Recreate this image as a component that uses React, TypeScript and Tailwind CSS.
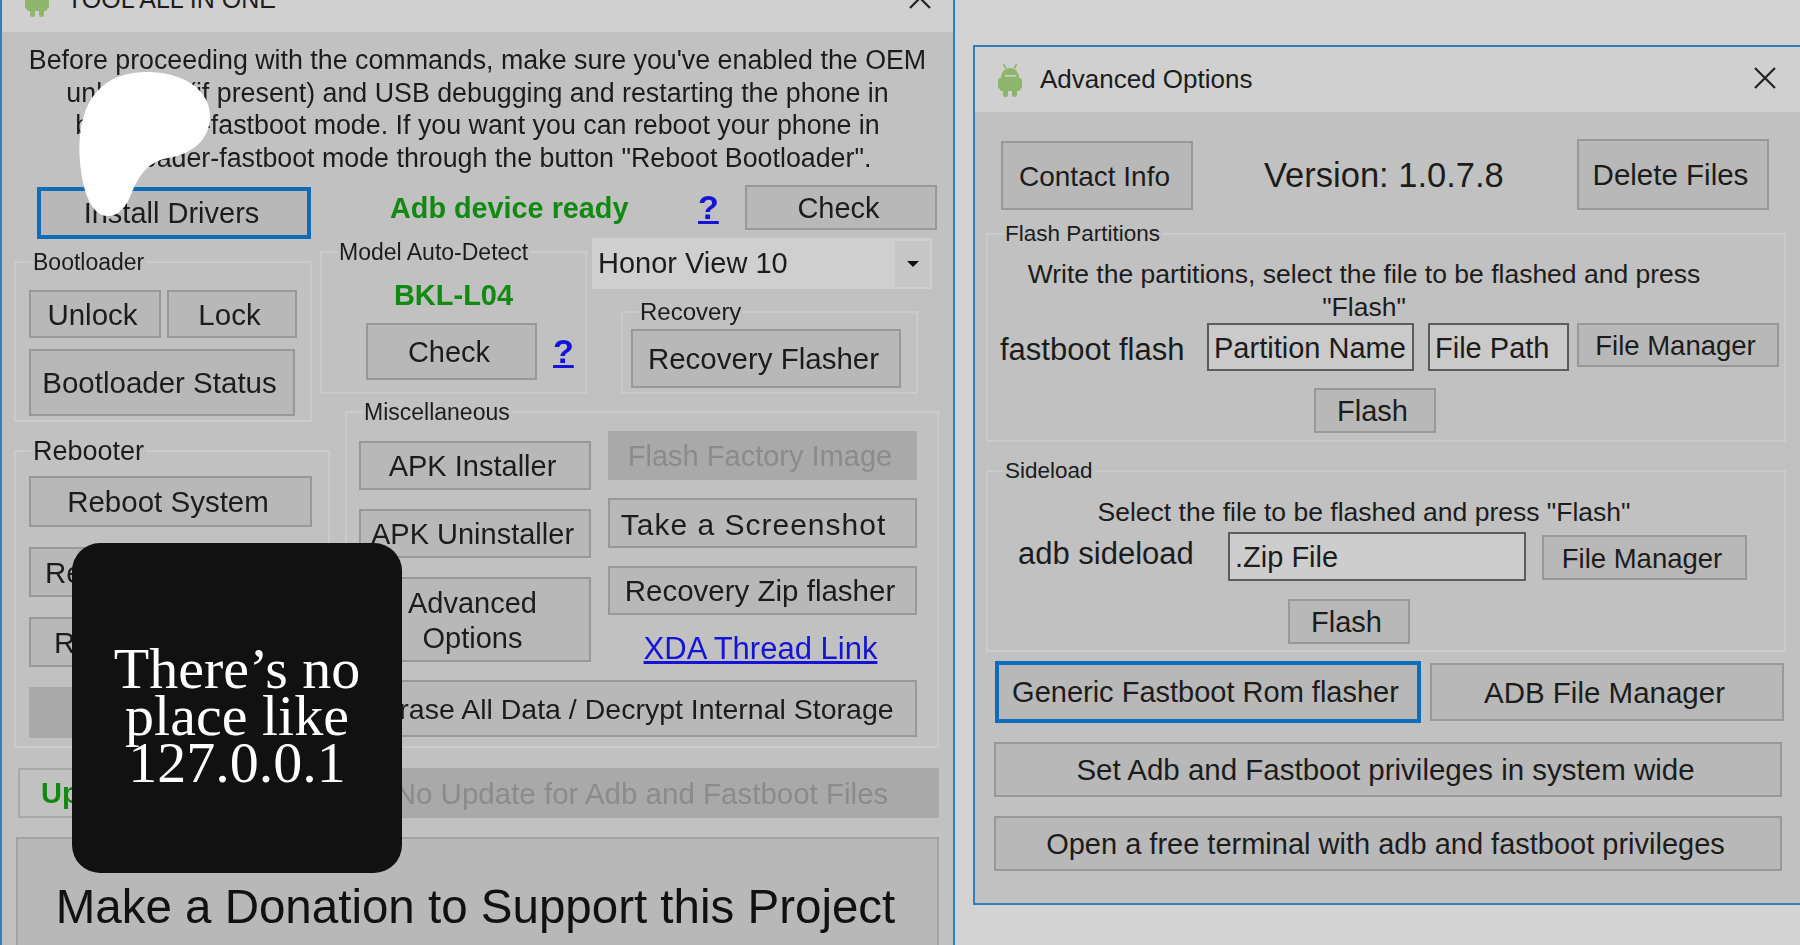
import React from "react";

const FONT = "[font-family:'Liberation_Sans',Arial,sans-serif]";

function Android() {
  return (
    <svg width="24" height="36" viewBox="0 0 24 36" className="shrink-0">
      <g fill="#8db56c">
        <path d="M3 15a9 9 0 0 1 18 0v1H3z" />
        <rect x="2" y="17" width="20" height="12" rx="1.5" />
        <rect x="0" y="16" width="24" height="11" rx="2.5" />
        <rect x="5" y="27" width="5" height="8" rx="2" />
        <rect x="14" y="27" width="5" height="8" rx="2" />
        <path d="M7 7 4.8 2.4l1.4-.7L8.6 6.2zM17 7l2.2-4.6-1.4-.7-2.4 4.5z" />
      </g>
      <rect x="7" y="13" width="11" height="1.6" fill="#d0d0d0" />
    </svg>
  );
}

function CloseX() {
  return (
    <svg width="24" height="24" viewBox="0 0 24 24" className="mb-[4px] shrink-0">
      <path d="M2 2 22 22M22 2 2 22" stroke="#222" strokeWidth="2.2" fill="none" />
    </svg>
  );
}

function Btn({ className = "", children }: { className?: string; children: React.ReactNode }) {
  return (
    <div className={"flex shrink-0 items-center justify-center whitespace-nowrap border-2 border-[#989898] bg-[#b8b8b8] pr-[5px] pt-[2px] text-center text-[#1c1c1c] " + className}>
      {children}
    </div>
  );
}

function Disabled({ className = "", children }: { className?: string; children: React.ReactNode }) {
  return (
    <div className={"flex shrink-0 items-center justify-center whitespace-nowrap bg-[#a9a9a9] pr-[5px] pt-[2px] text-center text-[#8b8b8b] " + className}>
      {children}
    </div>
  );
}

function Group({ title, className = "", legend = "", children }: { title: string; className?: string; legend?: string; children: React.ReactNode }) {
  return (
    <fieldset className={"shrink-0 border-2 border-[#cbcbcb] text-[29.5px] " + className}>
      <legend className={"ml-[15px] h-[30px] px-[2px] leading-[30px] text-[#1c1c1c] " + (legend || "text-[23px]")}>{title}</legend>
      {children}
    </fieldset>
  );
}

function Title({ text, pr, size }: { text: string; pr: string; size: string }) {
  return (
    <div className={"flex h-[65px] items-center justify-between bg-[#d0d0d0] pl-[23px] " + pr}>
      <div className={"flex items-center gap-[18px] text-[#1c1c1c] " + size}>
        <Android />
        <span>{text}</span>
      </div>
      <CloseX />
    </div>
  );
}

function LeftWindow() {
  return (
    <div className="absolute left-0 top-[-33px] h-[1000px] w-[955px] border-x-2 border-[#2f7fc1] bg-[#c1c1c1]">
      <Title text="TOOL ALL IN ONE" pr="pr-[21px]" size="text-[25px]" />
      <div className="h-[143px] pt-[12px] text-center text-[26.8px] leading-[32.7px] text-[#1c1c1c]">
        <p>Before proceeding with the commands, make sure you've enabled the OEM</p>
        <p>unlocking (if present) and USB debugging and restarting the phone in</p>
        <p>bootloader-fastboot mode. If you want you can reboot your phone in</p>
        <p>bootloader-fastboot mode through the button "Reboot Bootloader".</p>
      </div>
      <div className="flex text-[29.5px]">
        <div className="ml-[12px] w-[319px] shrink-0">
          <div className="ml-[23px] mt-[12px] flex h-[52px] w-[274px] items-center justify-center border-[4px] border-[#0f6cb9] bg-[#b8b8b8] pr-[5px] pt-[2px] text-[29px] text-[#1c1c1c]">
            Install Drivers
          </div>
          <Group title="Bootloader" className="mt-[8px] h-[175px] w-[298px]">
            <div className="ml-[13px] mt-[13px] flex gap-[6px]">
              <Btn className="h-[48px] w-[132px]">Unlock</Btn>
              <Btn className="h-[48px] w-[130px]">Lock</Btn>
            </div>
            <Btn className="ml-[13px] mt-[11px] h-[67px] w-[266px]">Bootloader Status</Btn>
          </Group>
          <Group title="Rebooter" legend="text-[27px]" className="mt-[14px] h-[312px] w-[316px]">
            <div className="ml-[13px] mt-[10px] flex flex-col gap-[20px]">
              <Btn className="h-[51px] w-[283px]">Reboot System</Btn>
              <Btn className="h-[50px] w-[283px]">Reboot Bootloader</Btn>
              <Btn className="h-[50px] w-[283px]">Reboot Recovery</Btn>
              <Disabled className="h-[51px] w-[283px]">Fastboot</Disabled>
            </div>
          </Group>
        </div>
        <div className="ml-[12px] w-[594px] shrink-0">
          <div className="mt-[10px] flex h-[45px] items-center">
            <span className="ml-[45px] mt-[3px] w-[308px] text-[28.8px] font-bold text-[#118a11]">Adb device ready</span>
            <span className="w-[47px] text-[34px] font-bold text-[#1414d8] underline">?</span>
            <Btn className="h-[45px] w-[192px] text-[29px]">Check</Btn>
          </div>
          <div className="mt-[7px] flex">
            <Group title="Model Auto-Detect" className="-ml-[25px] h-[157px] w-[267px]">
              <div className="mt-[13px] text-center text-[29px] font-bold leading-[30px] text-[#118a11]">BKL-L04</div>
              <div className="ml-[44px] mt-[13px] flex items-center">
                <Btn className="h-[57px] w-[171px] text-[29px]">Check</Btn>
                <span className="ml-[16px] text-[34px] font-bold text-[#1414d8] underline">?</span>
              </div>
            </Group>
            <div className="ml-[5px]">
              <div className="mt-[1px] flex h-[51px] w-[340px] items-center justify-between bg-[#cfcfcf] pl-[6px] pr-[2px] text-[29px] text-[#1c1c1c]">
                <span>Honor View 10</span>
                <div className="flex h-[46px] w-[35px] items-center justify-center bg-[#c6c6c6]">
                  <svg width="12" height="8" viewBox="0 0 12 8"><path d="M0 1h12L6 7z" fill="#111" /></svg>
                </div>
              </div>
              <Group title="Recovery" legend="text-[24px]" className="ml-[29px] mt-[8px] h-[97px] w-[297px]">
                <Btn className="ml-[8px] mt-[2px] h-[59px] w-[270px]">Recovery Flasher</Btn>
              </Group>
            </div>
          </div>
          <Group title="Miscellaneous" className="mt-[3px] h-[351px] w-[594px]">
            <div className="flex">
              <div className="ml-[12px] mt-[14px] flex w-[232px] flex-col gap-[19px]">
                <Btn className="h-[49px] w-[232px] text-[29px]">APK Installer</Btn>
                <Btn className="h-[49px] w-[232px] text-[29px]">APK Uninstaller</Btn>
                <Btn className="h-[85px] w-[232px] text-[29px] leading-[35px]">Advanced<br />Options</Btn>
              </div>
              <div className="ml-[17px] mt-[4px] flex w-[309px] flex-col gap-[18px]">
                <Disabled className="h-[49px] w-[309px] text-[29px]">Flash Factory Image</Disabled>
                <Btn className="h-[50px] w-[309px] pr-[18px] text-[30px] tracking-[1px]">Take a Screenshot</Btn>
                <Btn className="h-[49px] w-[309px] text-[29.5px]">Recovery Zip flasher</Btn>
                <div className="mt-[1px] h-[30px] pr-[4px] text-center text-[31px] leading-[30px] text-[#1414d8] underline">XDA Thread Link</div>
              </div>
            </div>
            <Btn className="ml-[15px] mt-[16px] h-[57px] w-[555px] text-[28.5px]">Erase All Data / Decrypt Internal Storage</Btn>
          </Group>
        </div>
      </div>
      <div className="ml-[16px] mt-[20px] flex gap-[4px] text-[29px]">
        <div className="flex h-[50px] w-[327px] items-center border-2 border-[#a9a9a9] pl-[21px] pt-[2px] font-bold text-[#118a11]">Update Tool</div>
        <Disabled className="h-[50px] w-[590px] text-[29.5px]">No Update for Adb and Fastboot Files</Disabled>
      </div>
      <div className="ml-[14px] mt-[19px] h-[200px] w-[923px] border-2 border-[#a2a2a2] bg-[#b8b8b8] pr-[4px] pt-[42px] text-center text-[47.5px] leading-[52px] text-[#111]">
        Make a Donation to Support this Project
      </div>
    </div>
  );
}

function RightWindow() {
  return (
    <div className="absolute left-[973px] top-[45px] h-[860px] w-[860px] border-2 border-[#2f7fc1] bg-[#c1c1c1]">
      <Title text="Advanced Options" pr="pr-[54px]" size="text-[26px]" />
      <div className="ml-[26px] mt-[27px] flex items-center">
        <Btn className="mt-[2px] h-[69px] w-[192px] text-[28px]">Contact Info</Btn>
        <div className="ml-[71px] mt-[2px] w-[313px] text-[34.5px] text-[#1c1c1c]">Version: 1.0.7.8</div>
        <Btn className="h-[71px] w-[192px] text-[29.5px]">Delete Files</Btn>
      </div>
      <Group title="Flash Partitions" legend="text-[22.5px]" className="ml-[11px] mt-[9px] h-[223px] w-[800px]">
        <div className="mr-[44px] mt-[9px] text-center text-[26.5px] leading-[33px] text-[#1c1c1c]">
          <p>Write the partitions, select the file to be flashed and press</p>
          <p>"Flash"</p>
        </div>
        <div className="-mt-[1px] ml-[12px] flex items-start">
          <span className="mt-[9px] w-[207px] text-[31px] leading-[36px] text-[#1c1c1c]">fastboot flash</span>
          <div className="h-[48px] w-[207px] border-2 border-[#5c5c5c] bg-[#cacaca] pl-[5px] text-[29px] leading-[47px] text-[#1c1c1c]">Partition Name</div>
          <div className="ml-[14px] h-[48px] w-[141px] border-2 border-[#5c5c5c] bg-[#cacaca] pl-[5px] text-[29px] leading-[47px] text-[#1c1c1c]">File Path</div>
          <Btn className="ml-[8px] h-[44px] w-[202px] text-[27.5px]">File Manager</Btn>
        </div>
        <Btn className="ml-[326px] mt-[17px] h-[45px] w-[122px] text-[29px]">Flash</Btn>
      </Group>
      <Group title="Sideload" legend="text-[22.5px]" className="ml-[11px] mt-[14px] h-[196px] w-[800px]">
        <div className="mr-[44px] mt-[10px] text-center text-[26.5px] leading-[33px] text-[#1c1c1c]">Select the file to be flashed and press "Flash"</div>
        <div className="ml-[30px] mt-[3px] flex items-start">
          <span className="mt-[4px] w-[210px] text-[31px] leading-[36px] text-[#1c1c1c]">adb sideload</span>
          <div className="h-[49px] w-[298px] border-2 border-[#5c5c5c] bg-[#cdcdcd] pl-[5px] text-[29px] leading-[47px] text-[#1c1c1c]">.Zip File</div>
          <Btn className="ml-[16px] mt-[3px] h-[45px] w-[205px] text-[27.5px]">File Manager</Btn>
        </div>
        <Btn className="ml-[300px] mt-[18px] h-[45px] w-[122px] text-[29px]">Flash</Btn>
      </Group>
      <div className="ml-[20px] mt-[9px] flex items-center">
        <div className="flex h-[62px] w-[426px] items-center justify-center border-[4px] border-[#0f6cb9] bg-[#b8b8b8] pr-[5px] pt-[2px] text-[29px] text-[#1c1c1c]">Generic Fastboot Rom flasher</div>
        <Btn className="ml-[9px] h-[58px] w-[354px] text-[29.5px]">ADB File Manager</Btn>
      </div>
      <Btn className="ml-[19px] mt-[19px] h-[55px] w-[788px] text-[29.5px]">Set Adb and Fastboot privileges in system wide</Btn>
      <Btn className="ml-[19px] mt-[19px] h-[55px] w-[788px] text-[29px]">Open a free terminal with adb and fastboot privileges</Btn>
    </div>
  );
}

export default function App() {
  return (
    <div className={"relative h-[945px] w-[1800px] overflow-hidden bg-[#d3d3d3] " + FONT}>
      <div className="blur-[0.5px]">
        <LeftWindow />
        <RightWindow />
      </div>
      <svg className="absolute left-[76px] top-[70px]" width="136" height="150" viewBox="0 0 136 150">
        <path d="M68 2C104 1 134 18 134 46C134 70 116 84 92 88C72 92 64 104 56 122C50 138 42 146 32 146C16 146 7 124 4 92C0 40 18 4 68 2Z" fill="#fff" />
      </svg>
      <div className="absolute left-[72px] top-[543px] flex h-[330px] w-[330px] items-center justify-center rounded-[28px] bg-[#111111] pt-[14px] text-center [font-family:'Liberation_Serif',serif] text-[58px] leading-[47px] text-white">
        <p>There’s no<br />place like<br />127.0.0.1</p>
      </div>
    </div>
  );
}
